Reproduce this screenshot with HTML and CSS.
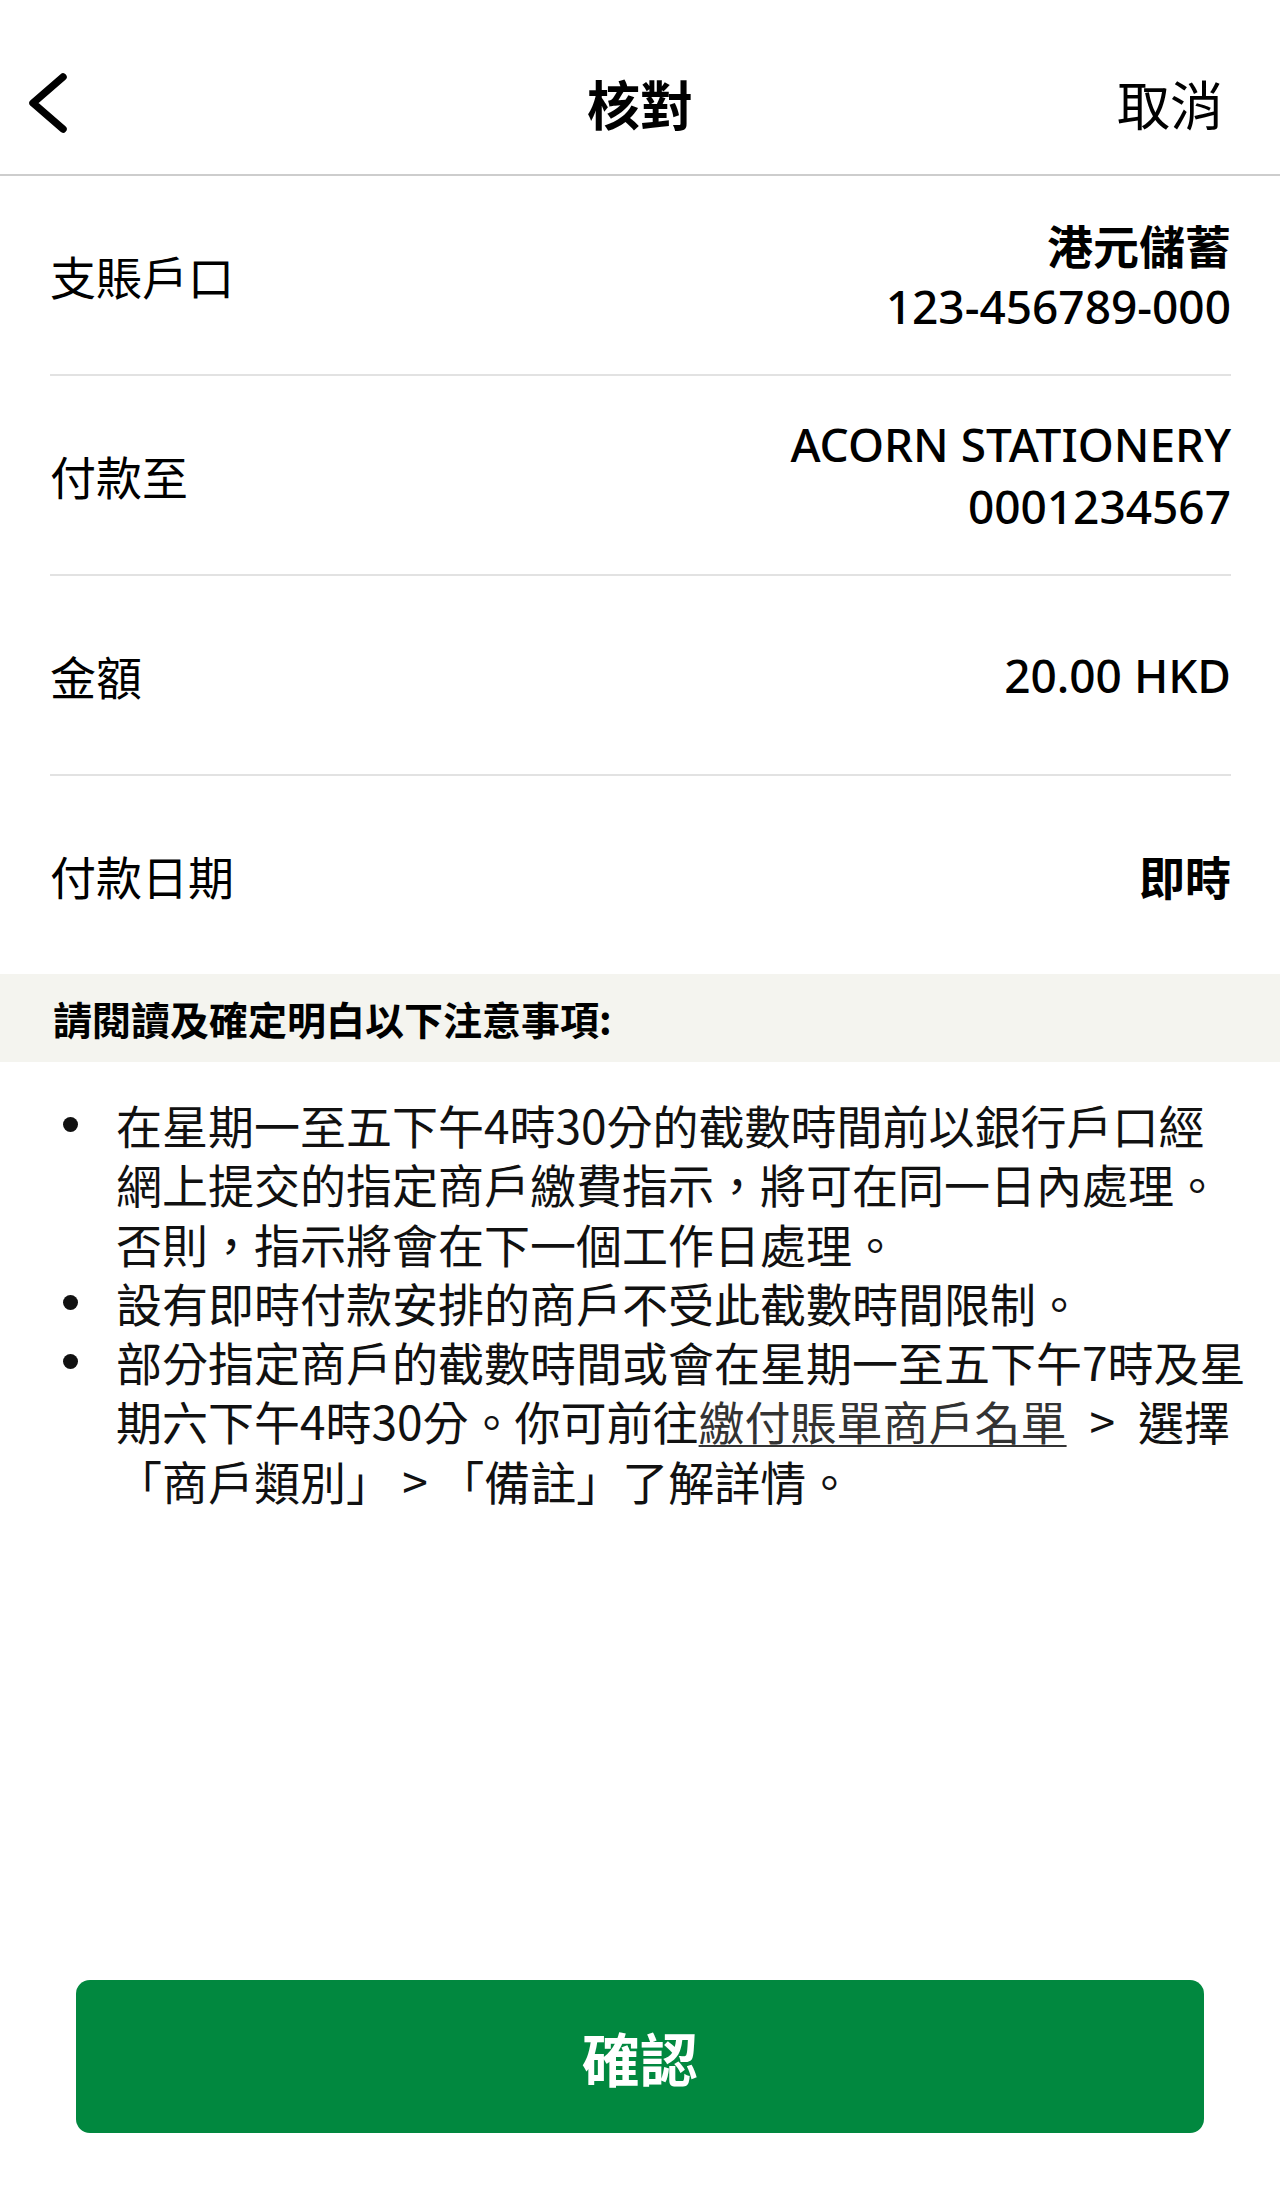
FILE: index.html
```html
<!DOCTYPE html>
<html lang="zh-Hant">
<head>
<meta charset="utf-8">
<title>核對</title>
<link rel="stylesheet" href="styles.css">
</head>
<body>
<div class="page">
  <header class="topbar">
    <div class="back">
      <svg class="back-icon" width="48" height="70" viewBox="0 0 48 70" aria-hidden="true">
        <polyline points="39,9 9,35 39,61" fill="none" stroke="#000" stroke-width="7.5" stroke-linecap="round" stroke-linejoin="round"/>
      </svg>
    </div>
    <h1 class="title">核對</h1>
    <div class="cancel">取消</div>
  </header>

  <section class="details">
    <div class="row">
      <div class="label">支賬戶口</div>
      <div class="value">
        <div class="strong">港元儲蓄</div>
        <div class="num">123-456789-000</div>
      </div>
    </div>
    <div class="row">
      <div class="label">付款至</div>
      <div class="value">
        <div class="num">ACORN STATIONERY</div>
        <div class="num">0001234567</div>
      </div>
    </div>
    <div class="row">
      <div class="label">金額</div>
      <div class="value">
        <div class="num">20.00 HKD</div>
      </div>
    </div>
    <div class="row">
      <div class="label">付款日期</div>
      <div class="value">
        <div class="strong">即時</div>
      </div>
    </div>
  </section>

  <div class="notice-head">請閱讀及確定明白以下注意事項:</div>

  <ul class="notes">
    <li><span class="dot"></span><p>在星期一至五下午4時30分的截數時間前以銀行戶口經<br>網上提交的指定商戶繳費指示，將可在同一日內處理。<br>否則，指示將會在下一個工作日處理。</p></li>
    <li><span class="dot"></span><p>設有即時付款安排的商戶不受此截數時間限制。</p></li>
    <li><span class="dot"></span><p>部分指定商戶的截數時間或會在星期一至五下午7時及星<br>期六下午4時30分。你可前往<a class="link" href="#">繳付賬單商戶名單</a>&ensp;&gt;&ensp;選擇<br>「商戶類別」 &gt; 「備註」了解詳情。</p></li>
  </ul>

  <footer class="actions">
    <button class="confirm" type="button">確認</button>
  </footer>
</div>
</body>
</html>
```

FILE: styles.css
```css
* {
  box-sizing: border-box;
}

html, body {
  margin: 0;
  padding: 0;
  background: #ffffff;
}

body {
  font-family: "Noto Sans", "Noto Sans CJK TC", sans-serif;
  color: #000;
}

.page {
  width: 1280px;
  height: 2200px;
  display: flex;
  flex-direction: column;
}

/* Top bar */
.topbar {
  height: 176px;
  padding: 32px 24px 0 24px;
  border-bottom: 2px solid #cdcdcd;
  display: grid;
  grid-template-columns: 1fr auto 1fr;
  align-items: center;
}

.back {
  display: flex;
  align-items: center;
}

.back-icon {
  display: block;
}

.title {
  margin: 0;
  font-family: "Noto Sans CJK TC", sans-serif;
  font-size: 53px;
  font-weight: 700;
  line-height: 1;
}

.cancel {
  justify-self: end;
  margin-right: 33px;
  font-family: "Noto Sans CJK TC", sans-serif;
  font-size: 53px;
  font-weight: 400;
  line-height: 1;
}

/* Detail rows */
.details {
  padding: 0 49px 0 50px;
}

.row {
  height: 200px;
  border-bottom: 2px solid #e2e2e2;
  display: flex;
  align-items: center;
  justify-content: space-between;
}

.label {
  font-family: "Noto Sans CJK TC", sans-serif;
  font-size: 46px;
  font-weight: 400;
  line-height: 62px;
}

.value {
  text-align: right;
  font-size: 46px;
  line-height: 62px;
}

.strong {
  font-family: "Noto Sans CJK TC", sans-serif;
  font-weight: 700;
}

.num {
  font-family: "Noto Sans", "Noto Sans CJK TC", sans-serif;
  font-weight: 500;
}

/* Notice */
.notice-head {
  height: 88px;
  margin-top: -2px;
  background: #f4f4ef;
  padding-left: 53px;
  display: flex;
  align-items: center;
  font-family: "Noto Sans CJK TC", sans-serif;
  font-size: 39px;
  font-weight: 700;
}

.notes {
  list-style: none;
  margin: 33px 0 0 0;
  padding: 0 0 0 50px;
}

.notes li {
  display: flex;
  align-items: flex-start;
}

.dot {
  flex-shrink: 0;
  width: 15px;
  height: 15px;
  border-radius: 50%;
  background: #111;
  margin: 22px 38px 0 13px;
}

.notes p {
  margin: 0;
  font-family: "Noto Sans CJK TC", sans-serif;
  font-size: 46px;
  line-height: 59.3px;
  color: #111;
  white-space: nowrap;
}

.link {
  color: #333;
  text-decoration: underline;
  text-decoration-thickness: 2px;
  text-underline-offset: 5px;
}

/* Confirm button */
.actions {
  margin-top: auto;
  padding: 0 76px 67px 76px;
}

.confirm {
  display: block;
  width: 100%;
  height: 153px;
  border: none;
  border-radius: 14px;
  background: #01883f;
  color: #fff;
  font-family: "Noto Sans CJK TC", sans-serif;
  font-size: 58px;
  font-weight: 700;
  cursor: pointer;
}
```
